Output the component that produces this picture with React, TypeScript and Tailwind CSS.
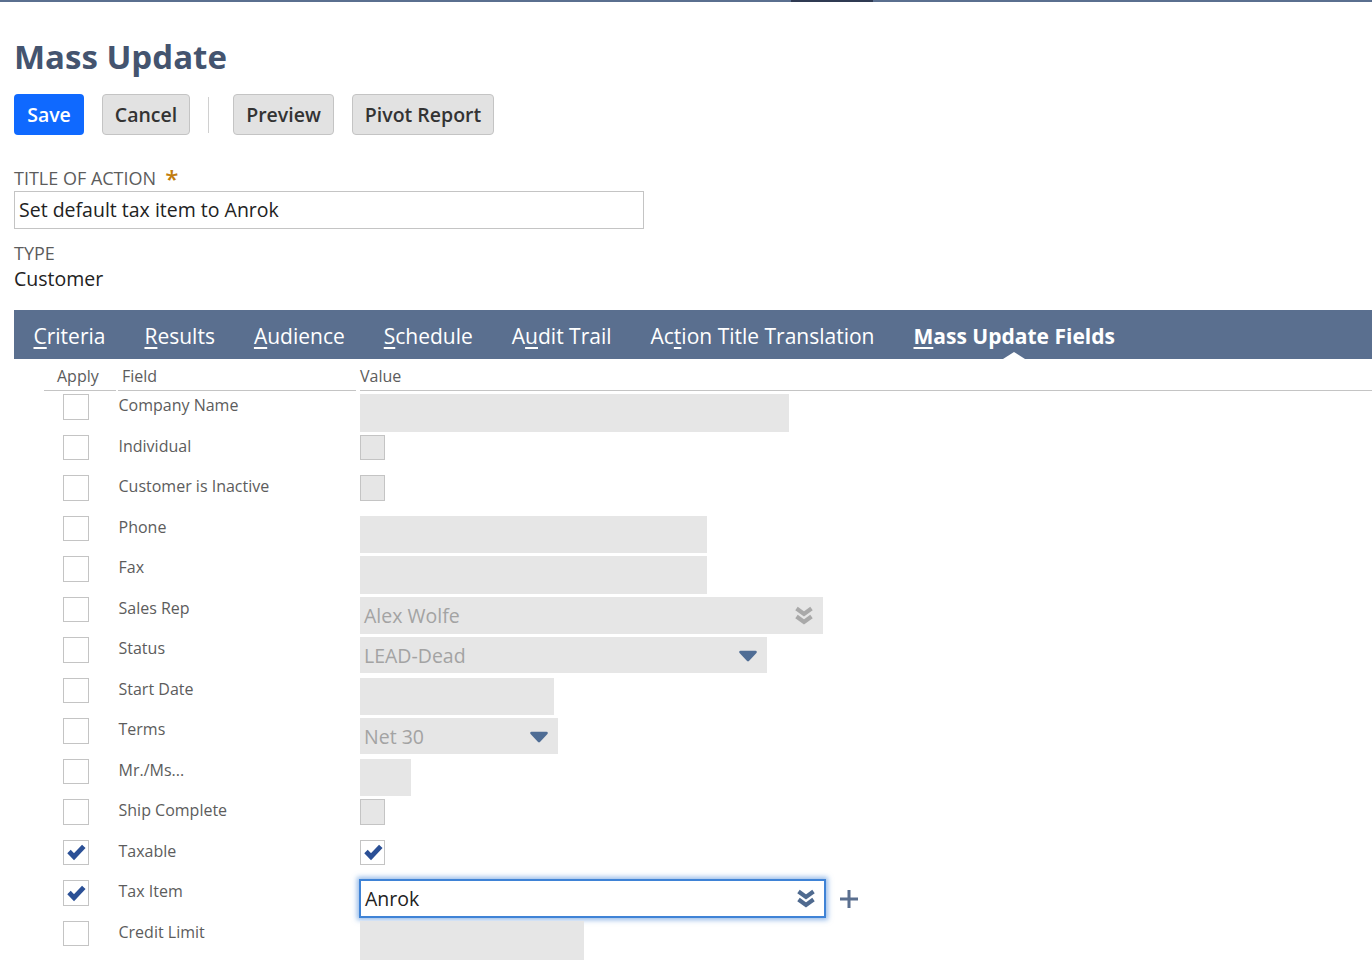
import React from "react";

const Check = () => (
  <svg viewBox="0 0 20 20" className="w-[20px] h-[20px]">
    <path d="M3 9.5 L8 14.7 L17.8 4.3" fill="none" stroke="#2b5096" strokeWidth="4.8" />
  </svg>
);

const Box = ({ checked, disabled, small }: { checked?: boolean; disabled?: boolean; small?: boolean }) => (
  <div className={`${small ? "w-[25px]" : "w-[26px]"} h-[25.5px] border border-[#c4c4c4] flex items-center justify-center ${disabled ? "bg-[#e6e6e6]" : "bg-white"}`}>
    {checked && <Check />}
  </div>
);

const Double = ({ color }: { color: string }) => (
  <svg viewBox="0 0 20 20" className="w-[20px] h-[20px]">
    <path d="M2.5 2.5 L10 8 L17.5 2.5 M2.5 10.5 L10 16 L17.5 10.5" fill="none" stroke={color} strokeWidth="4.2" />
  </svg>
);

const Tri = () => (
  <svg viewBox="0 0 20 12" className="w-[20px] h-[12px]">
    <path d="M2.5 2 H17.5 L10 10 Z" fill="#4f6d95" stroke="#4f6d95" strokeWidth="2.6" strokeLinejoin="round" />
  </svg>
);

const Gray = ({ w, h, children }: { w: string; h: string; children?: React.ReactNode }) => (
  <div className={`${w} ${h} bg-[#e6e6e6] flex items-center justify-between text-[19.5px] text-[#a3a3a3] pl-[4px] pt-[1px]`}>{children}</div>
);

const rows: { label: string; checked?: boolean; value: React.ReactNode }[] = [
  { label: "Company Name", value: <Gray w="w-[429px]" h="h-[38px]" /> },
  { label: "Individual", value: <Box disabled small /> },
  { label: "Customer is Inactive", value: <Box disabled small /> },
  { label: "Phone", value: <Gray w="w-[347px]" h="h-[37px]" /> },
  { label: "Fax", value: <Gray w="w-[347px]" h="h-[38px]" /> },
  {
    label: "Sales Rep",
    value: (
      <Gray w="w-[463px]" h="h-[37px]">
        <span>Alex Wolfe</span>
        <span className="mr-[9px] flex"><Double color="#a9a9a9" /></span>
      </Gray>
    ),
  },
  {
    label: "Status",
    value: (
      <Gray w="w-[407px]" h="h-[36px]">
        <span>LEAD-Dead</span>
        <span className="mr-[9px] flex"><Tri /></span>
      </Gray>
    ),
  },
  { label: "Start Date", value: <Gray w="w-[194px]" h="h-[37px]" /> },
  {
    label: "Terms",
    value: (
      <Gray w="w-[198px]" h="h-[36px]">
        <span>Net 30</span>
        <span className="mr-[9px] flex"><Tri /></span>
      </Gray>
    ),
  },
  { label: "Mr./Ms...", value: <Gray w="w-[51px]" h="h-[37px]" /> },
  { label: "Ship Complete", value: <Box disabled small /> },
  { label: "Taxable", checked: true, value: <Box checked small /> },
  {
    label: "Tax Item",
    checked: true,
    value: (
      <div className="flex items-center -mt-[1px]">
        <div className="w-[467px] h-[39px] bg-white border-2 border-[#3f83d6] shadow-[0_0_5px_2px_rgba(63,131,214,0.55)] flex items-center justify-between pl-[4px] pr-[8px] text-[19.5px] text-[#222222] -ml-[1px]">
          <span>Anrok</span>
          <Double color="#4f6a8f" />
        </div>
        <svg viewBox="0 0 20 20" className="w-[20px] h-[20px] ml-[13px]">
          <path d="M10 1 V19 M1 10 H19" stroke="#5a6f8f" strokeWidth="3" />
        </svg>
      </div>
    ),
  },
  { label: "Credit Limit", value: <Gray w="w-[224px]" h="h-[40px]" /> },
];

const tabs: { pre?: string; u: string; post: string; active?: boolean }[] = [
  { u: "C", post: "riteria" },
  { u: "R", post: "esults" },
  { u: "A", post: "udience" },
  { u: "S", post: "chedule" },
  { pre: "A", u: "u", post: "dit Trail" },
  { pre: "Ac", u: "t", post: "ion Title Translation" },
  { u: "M", post: "ass Update Fields", active: true },
];

const Btn = ({ children, primary, w }: { children: React.ReactNode; primary?: boolean; w: string }) => (
  <div
    className={`${w} h-[41px] rounded-[4px] flex items-center justify-center text-[19.5px] font-semibold ${
      primary ? "bg-[#0f69ff] text-white" : "bg-[#e2e2e2] text-[#333333] border border-[#c4c4c4]"
    }`}
  >
    {children}
  </div>
);

export default function App() {
  return (
    <div className="w-[1372px] h-[960px] overflow-hidden bg-white font-['Open_Sans',sans-serif]">
      <div className="h-[2px] bg-[#5a6f8f] flex justify-start">
        <div className="ml-[791px] w-[82px] h-[2px] bg-[#2f3a52]" />
      </div>
      <div className="pl-[14px] pt-[33px]">
        <h1 className="text-[33px] leading-[44px] font-bold text-[#44546f]">Mass Update</h1>
        <div className="flex items-center mt-[15px]">
          <Btn primary w="w-[70px]">Save</Btn>
          <div className="ml-[18px]"><Btn w="w-[88px]">Cancel</Btn></div>
          <div className="w-px h-[36px] bg-[#d0d0d0] ml-[18px]" />
          <div className="ml-[24px]"><Btn w="w-[101px]">Preview</Btn></div>
          <div className="ml-[18px]"><Btn w="w-[142px]">Pivot Report</Btn></div>
        </div>
        <div className="mt-[30px] h-[26px] flex items-end text-[18px] leading-[26px] text-[#5c5c5c]">
          <span>TITLE OF ACTION</span>
          <span className="ml-[9px] text-[24px] leading-[24px] font-semibold text-[#c27d0e]">*</span>
        </div>
        <div className="w-[630px] h-[38px] border border-[#c4c4c4] flex items-center pl-[4px] text-[19.5px] text-[#222222]">
          Set default tax item to Anrok
        </div>
        <div className="mt-[11px] text-[18px] leading-[26px] text-[#5c5c5c]">TYPE</div>
        <div className="text-[19.5px] leading-[26px] text-[#222222]">Customer</div>
      </div>
      <div className="ml-[14px] mt-[18px] h-[49px] bg-[#5a6f8f] flex items-center pl-[19.5px] gap-[39px] text-[21px] text-white">
        {tabs.map((t, i) => (
          <div key={i} className={`relative h-[49px] flex items-center pt-[4px] ${t.active ? "font-bold" : ""}`}>
            <span>
              {t.pre}
              <u className="underline-offset-[3px]">{t.u}</u>
              {t.post}
            </span>
            {t.active && (
              <div className="absolute left-1/2 -translate-x-1/2 bottom-0 w-0 h-0 border-x-[11px] border-x-transparent border-b-[7px] border-b-white" />
            )}
          </div>
        ))}
      </div>
      <div className="flex h-[32px] text-[16px] text-[#5c5c5c]">
        <div className="ml-[44px] w-[72px] border-b border-[#c4c4c4] pl-[13px] leading-[34px]">Apply</div>
        <div className="ml-[2px] w-[238px] border-b border-[#c4c4c4] pl-[4px] leading-[34px]">Field</div>
        <div className="ml-[4px] flex-1 border-b border-[#c4c4c4] leading-[34px]">Value</div>
      </div>
      <div className="pt-[3px]">
        {rows.map((r) => (
          <div key={r.label} className="flex h-[40.5px] items-start">
            <div className="ml-[63px] w-[26px]"><Box checked={r.checked} /></div>
            <div className="ml-[29.5px] w-[241.5px] text-[16px] leading-[22px] text-[#5c5c5c]">{r.label}</div>
            <div>{r.value}</div>
          </div>
        ))}
      </div>
    </div>
  );
}
